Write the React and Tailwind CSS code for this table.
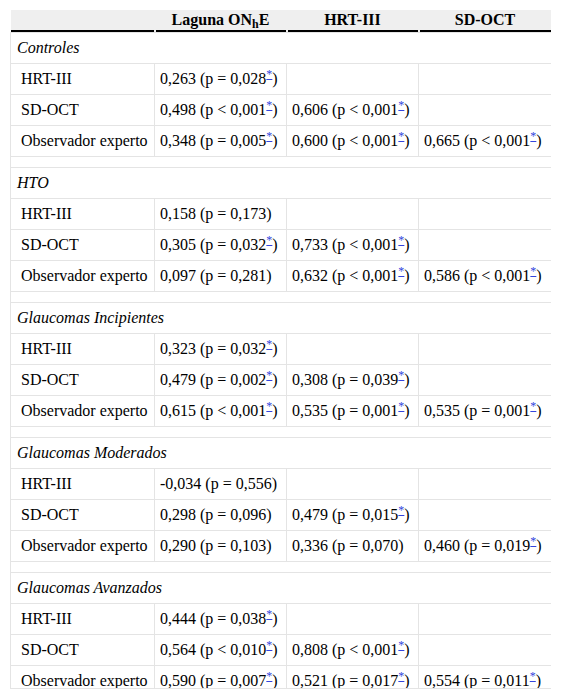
import React from "react";

const groups = [
  {
    name: "Controles",
    rows: [
      ["HRT-III", "0,263 (p = 0,028*)", "", ""],
      ["SD-OCT", "0,498 (p < 0,001*)", "0,606 (p < 0,001*)", ""],
      ["Observador experto", "0,348 (p = 0,005*)", "0,600 (p < 0,001*)", "0,665 (p < 0,001*)"],
    ],
  },
  {
    name: "HTO",
    rows: [
      ["HRT-III", "0,158 (p = 0,173)", "", ""],
      ["SD-OCT", "0,305 (p = 0,032*)", "0,733 (p < 0,001*)", ""],
      ["Observador experto", "0,097 (p = 0,281)", "0,632 (p < 0,001*)", "0,586 (p < 0,001*)"],
    ],
  },
  {
    name: "Glaucomas Incipientes",
    rows: [
      ["HRT-III", "0,323 (p = 0,032*)", "", ""],
      ["SD-OCT", "0,479 (p = 0,002*)", "0,308 (p = 0,039*)", ""],
      ["Observador experto", "0,615 (p < 0,001*)", "0,535 (p = 0,001*)", "0,535 (p = 0,001*)"],
    ],
  },
  {
    name: "Glaucomas Moderados",
    rows: [
      ["HRT-III", "-0,034 (p = 0,556)", "", ""],
      ["SD-OCT", "0,298 (p = 0,096)", "0,479 (p = 0,015*)", ""],
      ["Observador experto", "0,290 (p = 0,103)", "0,336 (p = 0,070)", "0,460 (p = 0,019*)"],
    ],
  },
  {
    name: "Glaucomas Avanzados",
    rows: [
      ["HRT-III", "0,444 (p = 0,038*)", "", ""],
      ["SD-OCT", "0,564 (p < 0,010*)", "0,808 (p < 0,001*)", ""],
      ["Observador experto", "0,590 (p = 0,007*)", "0,521 (p = 0,017*)", "0,554 (p = 0,011*)"],
    ],
  },
];

function Value({ text }) {
  if (!text.includes("*")) return <>{text}</>;
  const [before, after] = text.split("*");
  return (
    <>
      {before}
      <sup>
        <a href="#" className="text-[#3344dd] underline">
          *
        </a>
      </sup>
      {after}
    </>
  );
}

const cell = "border border-[#e4e4e4] h-[31px] py-0 px-[5px] align-middle whitespace-nowrap";

export default function App() {
  return (
    <div className="bg-white text-black min-h-[700px] pt-[10px] pl-[10px] font-['Liberation_Serif','Times_New_Roman',serif]">
      <div className="w-[541px] h-[679px] overflow-hidden border-b border-[#e4e4e4]">
        <table className="table-fixed border-collapse w-[541px] text-[16px] leading-[18px] font-['Liberation_Serif','Times_New_Roman',serif]">
          <colgroup>
            <col className="w-[144px]" />
            <col className="w-[132px]" />
            <col className="w-[132px]" />
            <col className="w-[133px]" />
          </colgroup>
          <thead>
            <tr className="bg-[#efefef]">
              {["", "Laguna ONhE", "HRT-III", "SD-OCT"].map((h, i) => (
                <th key={i} className="p-0 font-bold text-center align-bottom">
                  <div className="h-[20px] leading-[19px]">
                    {h === "Laguna ONhE" ? (
                      <>
                        Laguna ON<sub>h</sub>E
                      </>
                    ) : (
                      h
                    )}
                  </div>
                  <div className={i === 0 ? "h-[2px] bg-black mr-[1px]" : "h-[2px] bg-black ml-[1px] mr-[1px]"} />
                </th>
              ))}
            </tr>
          </thead>
          <tbody>
            {groups.map((g, gi) => (
              <React.Fragment key={g.name}>
                {gi > 0 && (
                  <tr>
                    <td colSpan={4} className="border border-[#e4e4e4] h-[11px] p-0" />
                  </tr>
                )}
                <tr>
                  <td colSpan={4} className={cell + " italic pl-[6px]"}>
                    {g.name}
                  </td>
                </tr>
                {g.rows.map((r, ri) => (
                  <tr key={ri}>
                    <td className={cell + " pl-[10px]"}>{r[0]}</td>
                    <td className={cell}>
                      <Value text={r[1]} />
                    </td>
                    <td className={cell}>
                      <Value text={r[2]} />
                    </td>
                    <td className={cell}>
                      <Value text={r[3]} />
                    </td>
                  </tr>
                ))}
              </React.Fragment>
            ))}
          </tbody>
        </table>
      </div>
    </div>
  );
}
